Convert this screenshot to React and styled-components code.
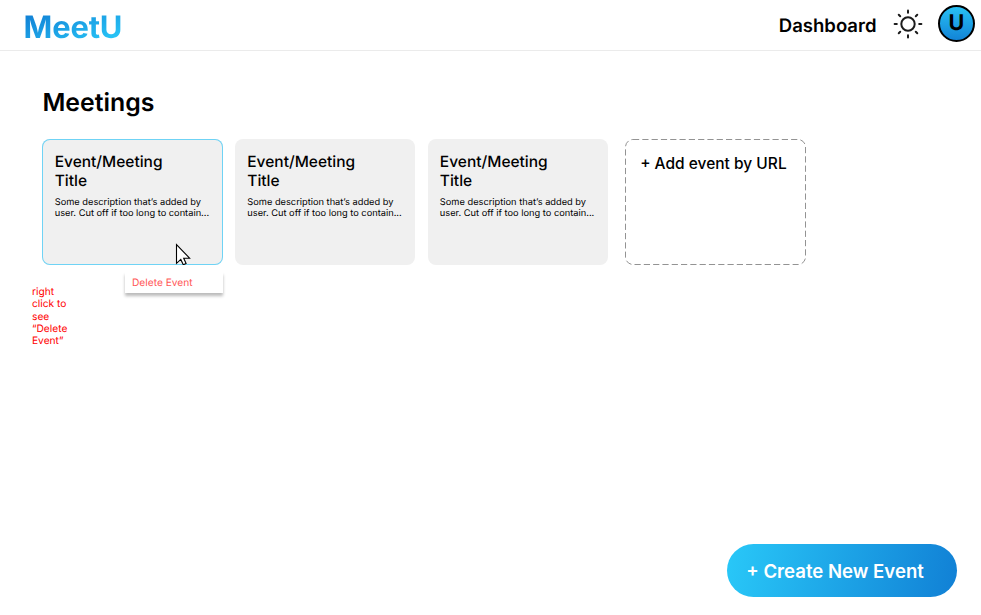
import React from "react";
import styled, { createGlobalStyle } from "styled-components";

const GlobalStyle = createGlobalStyle`
  * { box-sizing: border-box; }
  body {
    margin: 0;
    background: #fff;
    color: #000;
    font-family: Inter, "Liberation Sans", sans-serif;
    overflow: hidden;
    text-rendering: geometricPrecision;
  }
  h1, h2, p { margin: 0; }
  button { font-family: inherit; border: 0; cursor: pointer; }
`;

const Page = styled.div`
  display: flex;
  flex-direction: column;
  height: 100vh;
`;

const Header = styled.header`
  display: flex;
  align-items: center;
  height: 51px;
  padding: 0 6px 0 23.5px;
  border-bottom: 1px solid #ebebeb;
`;

const Logo = styled.div`
  padding-top: 5px;
  font-size: 30.9px;
  line-height: 37px;
  font-weight: 700;
  letter-spacing: -0.15px;
  background: linear-gradient(160deg, #1180d5 15%, #29c8f8 90%);
  background-clip: text;
  -webkit-background-clip: text;
  color: transparent;
`;

const Nav = styled.nav`
  display: flex;
  align-items: center;
  margin-left: auto;
`;

const NavLink = styled.a`
  font-size: 18.55px;
  line-height: 22px;
  font-weight: 600;
  margin: 1px 16.5px 0 0;
`;

const SunIcon = styled.svg`
  width: 30px;
  height: 30px;
  margin: -3px 15px 0 0;
`;

const Avatar = styled.div`
  display: flex;
  align-items: center;
  justify-content: center;
  width: 37px;
  height: 37px;
  margin-top: -4px;
  border: 2px solid #000;
  border-radius: 50%;
  background: linear-gradient(180deg, #29c4f6, #1180d5) border-box;
  font-size: 21.6px;
  line-height: 26px;
  font-weight: 700;
`;

const Main = styled.main`
  display: flex;
  flex-direction: column;
  flex: 1;
  padding: 36px 24px 18px 42.4px;
`;

const Heading = styled.h1`
  font-size: 24.85px;
  line-height: 30px;
  font-weight: 600;
`;

const CardRow = styled.div`
  display: flex;
  gap: 12.2px;
  margin-top: 22px;
`;

const Card = styled.article`
  position: relative;
  width: 180.4px;
  height: 126px;
  padding: 14px 12.3px;
  border-radius: 8px;
  background: #f0f0f0;
  box-shadow: ${(p) => (p.$selected ? "inset 0 0 0 1px #6fd3f5" : "none")};
`;

const CardTitle = styled.h2`
  width: 130px;
  font-size: 15.5px;
  line-height: 18.5px;
  font-weight: 500;
`;

const CardText = styled.p`
  margin-top: 7px;
  font-size: 9.28px;
  line-height: 11.2px;
  white-space: nowrap;
`;

const AddCard = styled.button`
  position: relative;
  width: 181px;
  height: 126px;
  margin-left: 5px;
  padding: 15px 0 0 15px;
  display: flex;
  align-items: flex-start;
  background: none;
  color: #000;
  font-size: 15.5px;
  line-height: 19px;
  font-weight: 500;
  white-space: nowrap;
`;

const DashedOutline = styled.svg`
  position: absolute;
  inset: 0;
  width: 181px;
  height: 126px;
`;

const Pointer = styled.svg`
  position: absolute;
  left: 132.6px;
  top: 104px;
  width: 16px;
  height: 22px;
`;

const ContextMenu = styled.div`
  position: absolute;
  left: 82.6px;
  top: 133px;
  width: 98px;
  height: 21px;
  padding: 1px 0 0 7px;
  background: #fff;
  box-shadow: 0 3px 3px rgba(0, 0, 0, 0.27);
  color: #ff5757;
  font-size: 10.2px;
  line-height: 21px;
`;

const Hint = styled.p`
  position: absolute;
  left: -10.4px;
  top: 147px;
  width: 42px;
  color: #ff0000;
  font-size: 10.2px;
  line-height: 12.3px;
`;

const CreateButton = styled.button`
  align-self: flex-end;
  margin-top: auto;
  width: 230px;
  height: 53px;
  padding: 0 0 0 19.2px;
  border-radius: 27px;
  background: linear-gradient(100deg, #29c8f8, #1180d5);
  color: #fff;
  font-size: 18.6px;
  line-height: 22px;
  font-weight: 600;
  text-align: left;
`;

const rays = [0, 45, 90, 135, 180, 225, 270, 315];

function EventCard({ selected, children }) {
  return (
    <Card $selected={selected}>
      <CardTitle>Event/Meeting Title</CardTitle>
      <CardText>
        Some description that’s added by
        <br />
        user. Cut off if too long to contain...
      </CardText>
      {children}
    </Card>
  );
}

export default function App() {
  return (
    <Page>
      <GlobalStyle />
      <Header>
        <Logo>MeetU</Logo>
        <Nav>
          <NavLink>Dashboard</NavLink>
          <SunIcon viewBox="0 0 30 30" fill="none" stroke="#1c1c1c" strokeWidth="2" strokeLinecap="round">
            <circle cx="15" cy="15" r="6.7" />
            {rays.map((a) => (
              <path key={a} d={a % 90 ? "M15 1.9V4" : "M15 1.6V3.8"} transform={`rotate(${a} 15 15)`} />
            ))}
          </SunIcon>
          <Avatar>U</Avatar>
        </Nav>
      </Header>
      <Main>
        <Heading>Meetings</Heading>
        <CardRow>
          <EventCard selected>
            <Pointer viewBox="0 0 16 22">
              <path
                d="M1.5 1.5V20.3L5.8 16.4L8.3 21.8L11.1 20.5L8.7 15.2H14.6Z"
                fill="#fff"
                stroke="#000"
                strokeWidth="1.1"
              />
            </Pointer>
            <ContextMenu>Delete Event</ContextMenu>
            <Hint>right click to see “Delete Event”</Hint>
          </EventCard>
          <EventCard />
          <EventCard />
          <AddCard>
            <DashedOutline viewBox="0 0 181 126" fill="none">
              <rect x="0.5" y="0.5" width="180" height="125" rx="7.5" stroke="#939393" strokeDasharray="6.2 3.1" />
            </DashedOutline>
            + Add event by URL
          </AddCard>
        </CardRow>
        <CreateButton>+ Create New Event</CreateButton>
      </Main>
    </Page>
  );
}
